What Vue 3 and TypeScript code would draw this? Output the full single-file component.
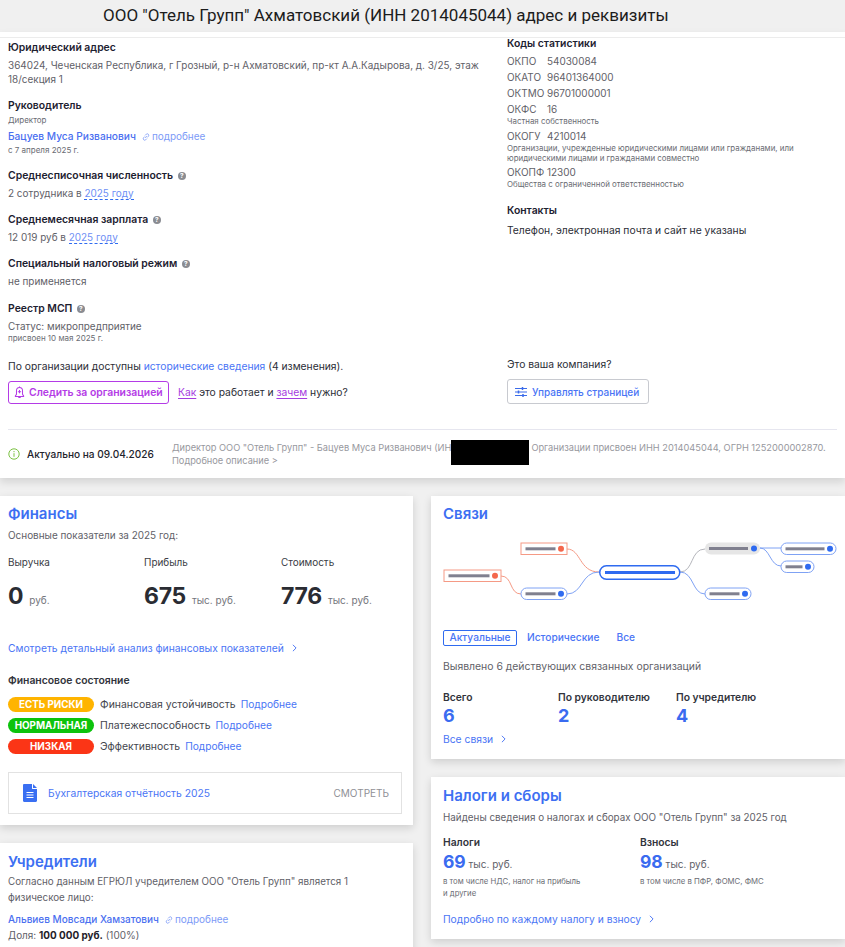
<script setup lang="ts">
const codes = [
  { k: 'ОКПО', v: '54030084', note: [] as string[] },
  { k: 'ОКАТО', v: '96401364000', note: [] as string[] },
  { k: 'ОКТМО', v: '96701000001', note: [] as string[] },
  { k: 'ОКФС', v: '16', note: ['Частная собственность'] },
  { k: 'ОКОГУ', v: '4210014', note: ['Организации, учрежденные юридическими лицами или гражданами, или', 'юридическими лицами и гражданами совместно'] },
  { k: 'ОКОПФ', v: '12300', note: ['Общества с ограниченной ответственностью'] },
]
const metrics = [
  { label: 'Выручка', num: '0', unit: 'руб.' },
  { label: 'Прибыль', num: '675', unit: 'тыс. руб.' },
  { label: 'Стоимость', num: '776', unit: 'тыс. руб.' },
]
const states = [
  { badge: 'ЕСТЬ РИСКИ', cls: 'amber', text: 'Финансовая устойчивость' },
  { badge: 'НОРМАЛЬНАЯ', cls: 'green', text: 'Платежеспособность' },
  { badge: 'НИЗКАЯ', cls: 'red', text: 'Эффективность' },
]
const rel = [
  { label: 'Всего', n: '6', cls: 'c1' },
  { label: 'По руководителю', n: '2', cls: 'c2' },
  { label: 'По учредителю', n: '4', cls: 'c3' },
]
const red = '#f59a85'
const dot = '#f4674c'
const blue = '#2f6bf0'
const lineBlue = '#7fa2f4'
type Node = { x: number; y: number; w: number; bar: number; kind: string }
const nodes: Node[] = [
  { x: 521, y: 543, w: 46, bar: 30, kind: 'red' },
  { x: 444, y: 570, w: 57, bar: 41, kind: 'red' },
  { x: 521, y: 588, w: 46, bar: 30, kind: 'blue' },
  { x: 705, y: 588, w: 46, bar: 30, kind: 'blue' },
  { x: 781, y: 543, w: 55, bar: 39, kind: 'blue' },
  { x: 781, y: 561, w: 33, bar: 17, kind: 'blue' },
]
</script>

<template>
  <div class="page">
    <h1 class="top">ООО "Отель Групп" Ахматовский (ИНН 2014045044) адрес и реквизиты</h1>

    <section class="main">
      <div class="inner">
        <div class="cols">
          <div class="left">
            <h3>Юридический адрес</h3>
            <p class="val">364024, Чеченская Республика, г Грозный, р-н Ахматовский, пр-кт А.А.Кадырова, д. 3/25, этаж 18/секция 1</p>

            <h3 class="g">Руководитель</h3>
            <p class="small m2">Директор</p>
            <p class="m3 line"><a class="name">Бацуев Муса Ризванович</a>
              <svg class="chain" viewBox="0 0 12 12"><path d="M5 7l2-2M4.600 5.400 3 7a1.800 1.800 0 0 0 2.500 2.500l1.600-1.600M7.400 6.600 9 5a1.800 1.800 0 0 0-2.500-2.500L4.900 4.100" /></svg>
              <a class="more">подробнее</a></p>
            <p class="small m1">с 7 апреля 2025 г.</p>

            <h3 class="g">Среднесписочная численность <i class="q">?</i></h3>
            <p class="val">2 сотрудника в <a class="dash">2025 году</a></p>

            <h3 class="g">Среднемесячная зарплата <i class="q">?</i></h3>
            <p class="val">12 019 руб в <a class="dash">2025 году</a></p>

            <h3 class="g">Специальный налоговый режим <i class="q">?</i></h3>
            <p class="val">не применяется</p>

            <h3 class="g13">Реестр МСП <i class="q">?</i></h3>
            <p class="val">Статус: микропредприятие</p>
            <p class="small assigned">присвоен 10 мая 2025 г.</p>

            <p class="dark hist">По организации доступны <a class="link">исторические сведения</a> (4 изменения).</p>
            <div class="follow">
              <button class="btn purple" type="button">
                <svg class="bell" viewBox="0 0 12 14"><path d="M6 1.500c2.200 0 3.300 1.600 3.300 3.700V9l1.200 1.700v.6h-9v-.6L2.700 9V5.200C2.700 3.100 3.800 1.500 6 1.500ZM4.700 12.500h2.600" /><path d="M6 .4v1.100M6 4.300v3.600M4.200 6.100h3.600" /></svg>
                Следить за организацией
              </button>
              <span class="dark how"><a class="under">Как</a> это работает и <a class="under">зачем</a> нужно?</span>
            </div>
          </div>

          <div class="right">
            <h3>Коды статистики</h3>
            <div class="codes">
              <template v-for="c in codes" :key="c.k">
                <div class="code"><span class="ck">{{ c.k }}</span><span>{{ c.v }}</span></div>
                <p v-for="n in c.note" :key="n" class="note">{{ n }}</p>
              </template>
            </div>
            <h3 class="contacts">Контакты</h3>
            <p class="dark none">Телефон, электронная почта и сайт не указаны</p>
            <p class="dark yours">Это ваша компания?</p>
            <button class="btn manage" type="button">
              <svg class="sliders" viewBox="0 0 12 10"><path d="M0 1.500h12M0 5h12M0 8.500h12" /><path class="knob" d="M7.500 0v3M3.500 3.500v3M8 7v3" /></svg>
              Управлять страницей
            </button>
          </div>
        </div>

        <div class="status">
          <svg class="info" viewBox="0 0 12 12"><circle cx="6" cy="6" r="5.200" /><path class="istem" d="M6 5.200v3.600M6 3v1.200" /></svg>
          <span class="actual">Актуально на 09.04.2026</span>
          <p class="desc">Директор ООО "Отель Групп" - Бацуев Муса Ризванович (ИН<span class="gap"></span>Организации присвоен ИНН 2014045044, ОГРН 1252000002870.<br />Подробное описание &gt;</p>
          <div class="redact"></div>
        </div>
      </div>
    </section>

    <div class="grid">
      <div class="stack">
        <section class="card fin">
          <h2>Финансы</h2>
          <p class="val lead">Основные показатели за 2025 год:</p>
          <div class="metrics">
            <div v-for="m in metrics" :key="m.label">
              <div class="mlabel">{{ m.label }}</div>
              <div class="mval"><b>{{ m.num }}</b><span>{{ m.unit }}</span></div>
            </div>
          </div>
          <a class="link arrow an">Смотреть детальный анализ финансовых показателей <svg class="chev" viewBox="0 0 6 10"><path d="M1 1l4 4-4 4" /></svg></a>
          <h4>Финансовое состояние</h4>
          <div v-for="s in states" :key="s.badge" class="state">
            <span class="badge" :class="s.cls">{{ s.badge }}</span>
            <span class="stext">{{ s.text }}</span>
            <a class="link lk">Подробнее</a>
          </div>
          <div class="report">
            <svg class="doc" viewBox="0 0 14 18"><path d="M0 1.200C0 .5.500 0 1.200 0H9v4.500c0 .3.200.5.500.5H14v11.800c0 .7-.5 1.200-1.200 1.200H1.200C.5 18 0 17.500 0 16.800Z" /><path d="M10 0l4 4h-4Z" /><path class="lines" d="M3.500 8.500h7M3.500 11h7M3.500 13.500h7" /></svg>
            <a class="link rt">Бухгалтерская отчётность 2025</a>
            <span class="see">СМОТРЕТЬ</span>
          </div>
        </section>

        <section class="card founders">
          <h2>Учредители</h2>
          <p class="val f1">Согласно данным ЕГРЮЛ учредителем ООО "Отель Групп" является 1 физическое лицо:</p>
          <p class="line f2"><a class="name fname">Альвиев Мовсади Хамзатович</a>
            <svg class="chain" viewBox="0 0 12 12"><path d="M5 7l2-2M4.600 5.400 3 7a1.800 1.800 0 0 0 2.500 2.500l1.600-1.600M7.400 6.600 9 5a1.800 1.800 0 0 0-2.500-2.500L4.900 4.100" /></svg>
            <a class="more">подробнее</a></p>
          <p class="val f3">Доля: <b class="strong">100 000 руб.</b> (100%)</p>
        </section>
      </div>

      <div class="stack">
        <section class="card links">
          <h2>Связи</h2>
          <svg class="map" viewBox="431 530 414 80">
            <g fill="none" stroke-width="1">
              <path :stroke="red" d="M567 549c14 0 12 23 32 23" />
              <path :stroke="red" d="M501 576c12 0 8 18 20 18" />
              <path :stroke="lineBlue" d="M567 594c16 0 14-22 32-22" />
              <path stroke="#b5b6bc" d="M680 572c14 0 10-23 25-23" />
              <path :stroke="lineBlue" d="M680 572c14 0 12 22 25 22" />
              <path :stroke="lineBlue" d="M760 548h21" />
              <path :stroke="lineBlue" d="M760 548c10 0 10 18 21 18" />
            </g>
            <rect x="705" y="542.500" width="55" height="12" rx="6" fill="#e6e6e6" />
            <rect x="709" y="547" width="39" height="3" fill="#80808f" />
            <circle cx="754" cy="548.500" r="3" :fill="blue" />
            <rect x="599.750" y="565.750" width="80" height="13.500" rx="6.700" fill="#fff" :stroke="blue" stroke-width="1.500" />
            <rect x="605" y="571" width="70" height="3" :fill="blue" />
            <g v-for="(n, i) in nodes" :key="i">
              <rect :x="n.x" :y="n.y" :width="n.w" height="11.500" :rx="n.kind === 'red' ? 0 : 5.700" fill="#fff"
                :stroke="n.kind === 'red' ? red : lineBlue" stroke-width="1" />
              <rect :x="n.x + 4.500" :y="n.y + 4.300" :width="n.bar" height="3" fill="#80808f" />
              <circle :cx="n.x + n.w - 6" :cy="n.y + 5.800" r="3" :fill="n.kind === 'red' ? dot : blue" />
            </g>
          </svg>
          <div class="tabs">
            <span class="tab on">Актуальные</span>
            <span class="tab t2">Исторические</span>
            <span class="tab t3">Все</span>
          </div>
          <p class="dim found">Выявлено 6 действующих связанных организаций</p>
          <div class="rel">
            <div v-for="r in rel" :key="r.label" :class="r.cls">
              <div class="rlabel">{{ r.label }}</div>
              <div class="rnum">{{ r.n }}</div>
            </div>
          </div>
          <a class="link arrow all">Все связи <svg class="chev" viewBox="0 0 6 10"><path d="M1 1l4 4-4 4" /></svg></a>
        </section>

        <section class="card taxes">
          <h2>Налоги и сборы</h2>
          <p class="val tlead">Найдены сведения о налогах и сборах ООО "Отель Групп" за 2025 год</p>
          <div class="tcols">
            <div>
              <div class="rlabel">Налоги</div>
              <div class="tnum"><b>69</b> тыс. руб.</div>
              <p class="tnote">в том числе НДС, налог на прибыль<br />и другие</p>
            </div>
            <div>
              <div class="rlabel">Взносы</div>
              <div class="tnum"><b>98</b> тыс. руб.</div>
              <p class="tnote">в том числе в ПФР, ФОМС, ФМС</p>
            </div>
          </div>
          <a class="link arrow tl">Подробно по каждому налогу и взносу <svg class="chev" viewBox="0 0 6 10"><path d="M1 1l4 4-4 4" /></svg></a>
        </section>
      </div>
    </div>
  </div>
</template>

<style>
html, body { margin: 0; background: #f0f0f0; }
</style>

<style scoped>
.page {
  width: 845px; height: 947px; overflow: hidden; background: #f0f0f0; color: #5f6168;
  font-family: Inter, "Noto Sans", sans-serif; font-size: 9.950px; position: relative;
}
p, h1, h2, h3, h4 { margin: 0; }
a { color: #4a75f5; }
.top {
  height: 32px; padding-left: 103px; box-sizing: border-box;
  font: 400 17px/30px Roboto, sans-serif; color: #1c1c1c; background: #f0f0f0;
}
.main {
  background: #fff; height: 446px; box-sizing: border-box; padding-top: 5px;
  box-shadow: 0 4px 8px rgba(0, 0, 0, .12); position: relative;
}
.inner { border-top: 1px solid #ececec; }
.cols { display: grid; grid-template-columns: 507px 1fr; height: 391px; }
.left { padding: 2px 0 0 8px; width: 476px; }
.right { margin-top: -2px; }
h3 { font-size: 10.400px; line-height: 14px; font-weight: 600; color: #1d2130; padding-top: 1px; margin-bottom: -1px; }
.val { line-height: 14px; margin-top: 4px; }
.g { margin-top: 12px; }
.g13 { margin-top: 13px; }
.small { font-size: 8px; line-height: 12px; color: #6a6c73; }
.m2 { margin-top: 2px; }
.m3 { margin-top: 3px; }
.m1 { margin-top: 1px; }
.assigned { margin-top: -1px; }
.line { line-height: 14px; display: flex; align-items: center; }
.name { color: #4a6ff0; font-weight: 500; font-size: 10.200px; }
.fname { font-size: 10px; }
.more { color: #7d9bf7; }
.chain { width: 10px; height: 10px; margin: 1px 1px 0 5px; fill: none; stroke: #7d9bf7; stroke-width: 1; }
.dash { color: #6e8ff5; border-bottom: 1px dashed #2f6bf0; }
.q {
  display: inline-block; width: 8px; height: 8px; border-radius: 50%; background: #8a8c92; color: #fff;
  font: 700 6.500px/8px Inter, sans-serif; text-align: center; margin-left: 2px; vertical-align: 1px;
}
.dark { color: #2b2d36; font-size: 10.300px; }
.hist { line-height: 14px; margin-top: 15px; }
.link { color: #4a75f5; font-size: 10.300px; }
.follow { display: flex; align-items: center; margin-top: 8px; }
.btn {
  height: 23px; box-sizing: border-box; background: #fff; border-radius: 3px; padding: 0; display: flex;
  align-items: center; font: 600 10.400px Inter, sans-serif;
}
.purple { width: 161px; border: 1px solid #b43be6; color: #b43be6; padding-left: 5px; gap: 4px; }
.bell { width: 11px; height: 13px; fill: none; stroke: #b43be6; stroke-width: 1.100; flex: none; }
.how { margin-left: 9px; margin-top: -1px; }
.under { color: #a53be0; text-decoration: underline; text-underline-offset: 2px; }
.codes { margin-top: 3px; }
.code { display: flex; line-height: 16px; }
.ck { width: 40px; }
.note { font-size: 7.900px; line-height: 10px; color: #6a6c73; margin: -1px 0 1.500px; white-space: nowrap; }
.note + .note { margin-top: -1.500px; }
.contacts { margin-top: 14px; }
.none { margin-top: 6px; line-height: 14px; }
.yours { margin-top: 120px; line-height: 14px; }
.manage { margin-top: 8px; width: 142px; border: 1px solid #c8cad0; color: #4a75f5; padding-left: 7px; gap: 5px; height: 25px; font-size: 10px; font-weight: 500; }
.sliders { width: 12px; height: 10px; fill: none; stroke: #3a6bea; stroke-width: 1; flex: none; }
.knob { stroke-width: 1.500; }
.status {
  margin: 0 8px; border-top: 1px solid #e6e6ef; height: 48px; display: flex; align-items: center; position: relative;
}
.info { width: 12px; height: 12px; fill: none; stroke: #7cc144; stroke-width: 1; margin-right: 7px; flex: none; }
.istem { stroke: #7cc144; }
.actual { color: #22242c; font-weight: 500; width: 145px; flex: none; font-size: 10.100px; }
.desc { font-size: 9.240px; line-height: 13px; color: #97989e; white-space: nowrap; }
.gap { display: inline-block; width: 80px; }
.redact { position: absolute; left: 443px; top: 10px; width: 78px; height: 25px; background: #000; }
.grid { display: grid; grid-template-columns: 413px 414px; column-gap: 18px; margin-top: 18px; }
.stack { display: flex; flex-direction: column; gap: 18px; }
.card { background: #fff; box-shadow: 0 3px 8px rgba(0, 0, 0, .14); box-sizing: border-box; padding-left: 8px; }
h2 { font-size: 15px; line-height: 18px; font-weight: 600; color: #3d6ff2; padding-top: 1px; margin-bottom: -1px; }
.fin { height: 329px; padding-top: 8px; }
.lead { margin-top: 6px; }
.metrics { display: grid; grid-template-columns: 136px 137px 1fr; margin-top: 13px; }
.mlabel { line-height: 14px; color: #3a3c44; }
.mval { margin-top: 13px; display: flex; align-items: baseline; height: 28px; }
.mval b { font-size: 23px; line-height: 28px; font-weight: 700; color: #2a2c33; letter-spacing: -.3px; }
.mval span { margin-left: 6px; font-size: 10px; color: #74767c; }
.an { display: block; margin-top: 31px; line-height: 14px; }
.chev { width: 5px; height: 8px; margin-left: 5px; fill: none; stroke: currentColor; stroke-width: 1.200; }
h4 { font-size: 10.400px; line-height: 14px; font-weight: 600; color: #32343c; margin: 19px 0 6px; }
.state { display: flex; align-items: center; height: 21px; }
.badge {
  width: 86px; height: 15px; border-radius: 8px; color: #fff; font-weight: 700; font-size: 9.800px; line-height: 15px;
  text-align: center; margin-right: 6px;
}
.amber { background: #ffb400; }
.green { background: #0cc30c; }
.red { background: #fb3516; }
.stext { color: #44464e; margin: -1px 5px 0 0; font-size: 10.450px; }
.lk { font-size: 10.200px; margin-top: -1px; }
.report {
  width: 394px; height: 42px; box-sizing: border-box; border: 1px solid #e2e2e2; margin-top: 15px; display: flex;
  align-items: center; padding: 0 12px 0 14px;
}
.doc { width: 14px; height: 18px; fill: #3a6ff2; flex: none; }
.lines { stroke: #fff; stroke-width: 1; fill: none; }
.rt { margin-left: 11px; flex: 1; }
.see { color: #8f9096; font-size: 10px; }
.founders { height: 130px; padding-top: 9px; }
.f1 { width: 345px; line-height: 16px; margin-top: 4px; font-size: 9.800px; }
.f2 { margin-top: 6px; }
.f3 { margin-top: 2px; }
.strong { color: #1f2129; }
.links { height: 263px; padding: 8px 0 0 12px; }
.map { display: block; width: 414px; height: 80px; margin: 8px 0 0 -12px; }
.tabs { display: flex; margin-top: 20px; height: 16px; color: #4a75f5; align-items: center; font-size: 10.200px; }
.tab { font-weight: 500; line-height: 13px; }
.t2, .t3 { margin-top: -1px; }
.on { width: 74px; height: 16px; box-sizing: border-box; border: 1px solid #2f6bf0; border-radius: 2px; text-align: center; }
.t2 { margin-left: 10px; }
.t3 { margin-left: 17px; }
.dim { font-size: 10.400px; line-height: 14px; }
.found { margin-top: 14px; }
.rel { display: grid; grid-template-columns: 115px 118px 1fr; margin-top: 16px; }
.rlabel { line-height: 14px; font-weight: 600; color: #32343c; font-size: 10.300px; }
.rnum { font-size: 18px; line-height: 22px; font-weight: 700; color: #3a6bf0; margin-top: 1px; }
.all { display: block; margin-top: 5px; line-height: 14px; }
.taxes { height: 162px; padding: 9px 0 0 12px; }
.tlead { margin-top: 6px; font-size: 9.850px; }
.tcols { display: grid; grid-template-columns: 197px 1fr; margin-top: 11px; }
.tnum { margin-top: 2px; line-height: 22px; font-size: 10px; color: #5f6168; }
.tnum b { font-size: 17.500px; font-weight: 700; color: #3a6bf0; }
.tnote { font-size: 7.750px; line-height: 12px; color: #6a6c73; margin-top: 0; }
.tl { display: block; margin-top: 13px; line-height: 14px; font-size: 10.250px; }
</style>
